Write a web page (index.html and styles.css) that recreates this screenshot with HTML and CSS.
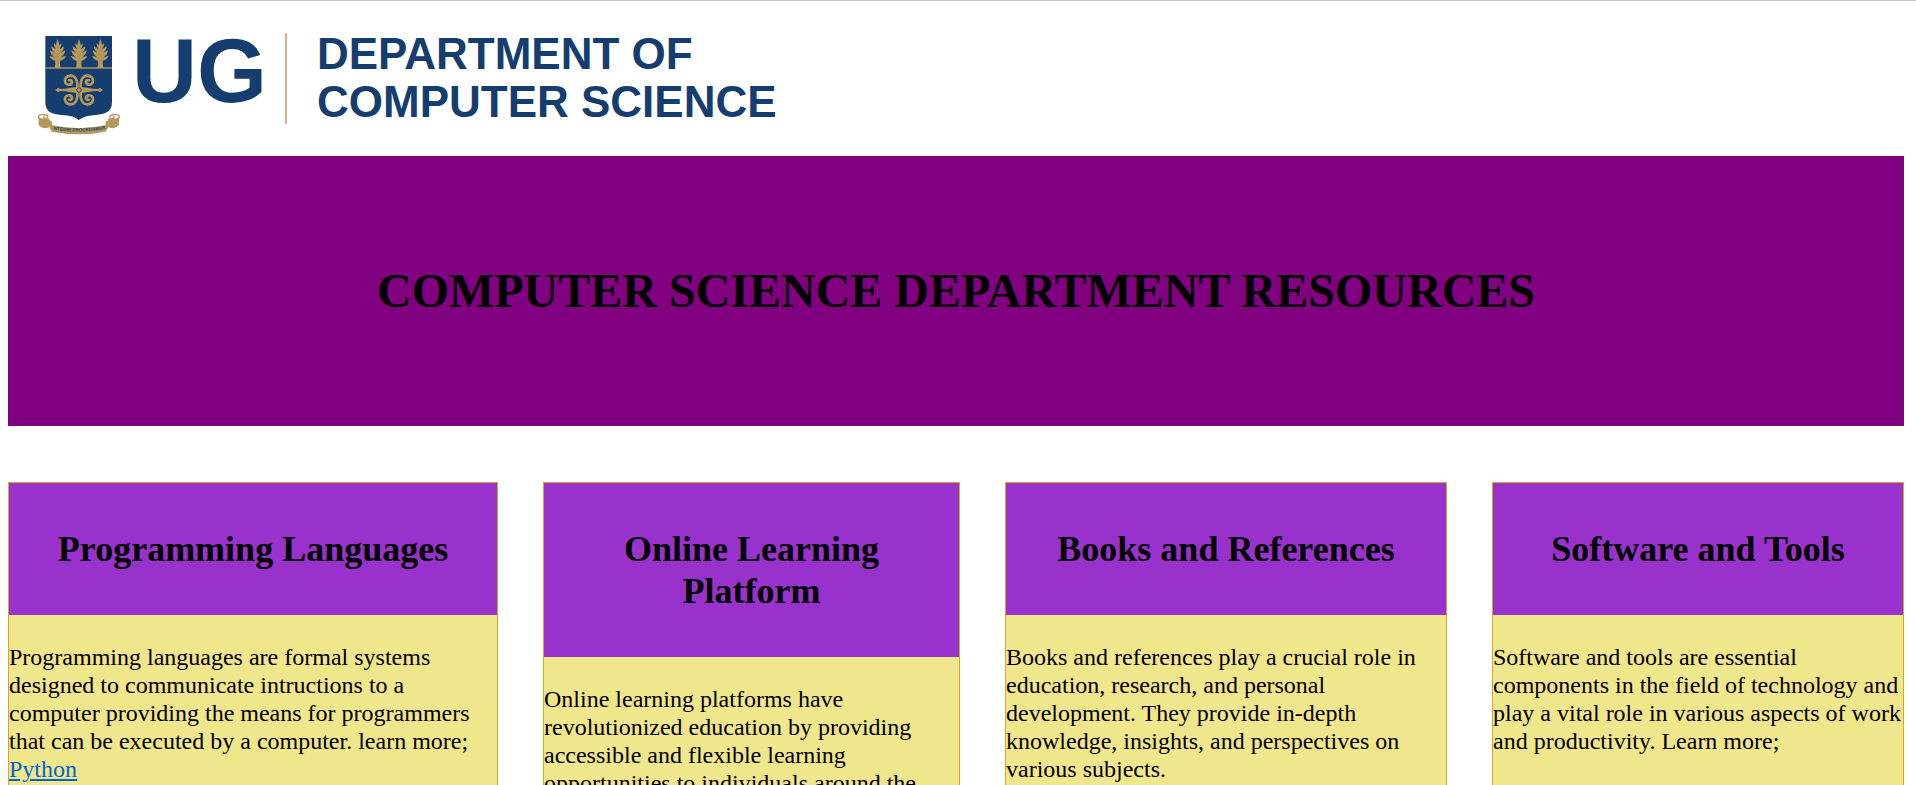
FILE: index.html
```html
<!DOCTYPE html>
<html lang="en">
<head>
<meta charset="utf-8">
<title>Computer Science Department Resources</title>
<link rel="stylesheet" href="styles.css">
</head>
<body>
<header class="brand">
  <svg class="crest" viewBox="21 45 249 303" aria-hidden="true">
    <defs>
      <g id="tree">
        <path d="M0 57 Q4 66 5 76 L11 69 Q12 79 6 88 L19 79 Q20 90 8 99 L23 91 Q22 104 9 112 L25 107 Q21 119 8 122 L7 131 L9 144 H-9 L-7 131 L-8 122 Q-21 119 -25 107 L-9 112 Q-22 104 -23 91 L-8 99 Q-20 90 -19 79 L-6 88 Q-12 79 -11 69 L-5 76 Q-4 66 0 57Z"/>
      </g>
      <path id="curl" d="M-5 -5 C-3 -18 -6 -43 -25 -43 C-39 -43 -45 -31 -41 -22 C-36 -12 -20 -15 -21 -25 C-22 -31 -30 -31 -31 -26"/>
      <path id="motto" d="M69 329 Q147 341 225 327"/>
    </defs>
    <path class="crest-field" d="M46 48H246V247C246 277 223 283 199 285C174 286 158 292 147 300C136 292 120 286 94 285C67 283 46 277 46 247Z"/>
    <g class="crest-gold">
      <use href="#tree" x="83"/><use href="#tree" x="147"/><use href="#tree" x="211"/>
      <rect x="46" y="142" width="200" height="4"/>
      <path d="M75 210L85 203L89 207C110 207 129 201 147 201C165 201 184 207 205 207L209 203L219 210L209 217L205 213C184 213 165 219 147 219C129 219 110 213 89 213L85 217Z"/>
    </g>
    <g class="crest-curls" transform="translate(147 210)">
      <use href="#curl"/><use href="#curl" transform="scale(-1 1)"/>
      <use href="#curl" transform="scale(1 -1)"/><use href="#curl" transform="scale(-1 -1)"/>
    </g>
    <path class="crest-knot" d="M147 202L155 210L147 218L139 210Z"/>
    <g class="crest-gold">
      <path d="M25 289C31 299 48 302 58 296V322C47 327 32 324 26 314Z"/>
      <path d="M268 289C262 299 245 302 235 296V322C246 327 261 324 267 314Z"/>
      <path d="M56 299L66 305V337L58 321ZM237 299L227 305V337L235 321Z"/>
      <path d="M66 315Q147 335 227 315V335Q147 351 66 335Z"/>
    </g>
    <g class="crest-roll">
      <path d="M58 296C53 300 31 300 26 292C23 283 36 283 47 285C58 287 54 296 45 295C39 294 40 290 44 290"/>
      <path d="M235 296C240 300 262 300 267 292C270 283 257 283 246 285C235 287 239 296 248 295C254 294 253 290 249 290"/>
    </g>
    <text class="motto"><textPath href="#motto" startOffset="50%">INTEGRI PROCEDAMUS</textPath></text>
  </svg>
  <span class="brand-short">UG</span>
  <span class="brand-rule"></span>
  <span class="brand-name">DEPARTMENT OF<br>COMPUTER SCIENCE</span>
</header>
<section class="banner">
  <h1 class="banner-title">COMPUTER SCIENCE DEPARTMENT RESOURCES</h1>
</section>
<main class="cards">
  <article class="card">
    <h2 class="card-title">Programming Languages</h2>
    <p class="card-text">Programming languages are formal systems designed to communicate intructions to a computer providing the means for programmers that can be executed by a computer. learn more; <a class="card-link" href="#python">Python</a></p>
  </article>
  <article class="card">
    <h2 class="card-title">Online Learning Platform</h2>
    <p class="card-text">Online learning platforms have revolutionized education by providing accessible and flexible learning opportunities to individuals around the</p>
  </article>
  <article class="card">
    <h2 class="card-title">Books and References</h2>
    <p class="card-text">Books and references play a crucial role in education, research, and personal development. They provide in-depth knowledge, insights, and perspectives on various subjects.</p>
  </article>
  <article class="card">
    <h2 class="card-title">Software and Tools</h2>
    <p class="card-text">Software and tools are essential components in the field of technology and play a vital role in various aspects of work and productivity. Learn more;</p>
  </article>
</main>
</body>
</html>
```
FILE: styles.css
```css
body {
  box-sizing: border-box;
  display: flex;
  flex-direction: column;
  height: 100vh;
  margin: 0;
  padding: 0 12px 0 8px;
  border-top: 1px solid #c8c8c8;
  background: #fff;
  color: #000;
  font-family: "Liberation Serif", "Times New Roman", serif;
  font-size: 24px;
  line-height: 28px;
}

.brand {
  display: flex;
  flex-shrink: 0;
  align-items: flex-start;
  padding: 26px 29px 20px;
  color: #153d6f;
  font-family: "Liberation Sans", Arial, sans-serif;
  font-weight: bold;
}

.crest {
  width: 83px;
  height: 101px;
  margin: 8px 12px 0 0;
}

.crest-field { fill: #153d6f; }
.crest-gold { fill: #b4975a; }

.crest-curls {
  fill: none;
  stroke: #b4975a;
  stroke-width: 8;
}

.crest-knot {
  fill: #b4975a;
  stroke: #153d6f;
  stroke-width: 3;
}

.crest-roll {
  fill: #fff;
  stroke: #b4975a;
  stroke-width: 4;
}

.motto {
  fill: #153d6f;
  font-size: 14px;
  text-anchor: middle;
}

.brand-short {
  font-size: 90px;
  line-height: 88px;
}

.brand-rule {
  width: 2px;
  height: 91px;
  margin: 6px 30px 0 18px;
  background: #cdb68c;
}

.brand-name {
  margin-top: 3px;
  font-size: 44px;
  line-height: 48px;
}

.banner {
  flex-shrink: 0;
  padding: 107px 20px;
  background: #800080;
  text-align: center;
}

.banner-title {
  margin: 0;
  font-size: 48px;
  line-height: 56px;
}

.cards {
  display: grid;
  flex: 1;
  grid-template-columns: 490fr 417fr 442fr 412fr;
  gap: 45px;
  min-height: 0;
  margin-top: 56px;
  overflow: hidden;
}

.card {
  border: 1px solid #daa520;
  background: #f0e68c;
}

.card-title {
  margin: 0;
  padding: 45px;
  background: #9932cc;
  font-size: 36px;
  line-height: 42px;
  text-align: center;
}

.card-text { margin: 28px 0; }
.card-link { color: #0066cc; }
```
